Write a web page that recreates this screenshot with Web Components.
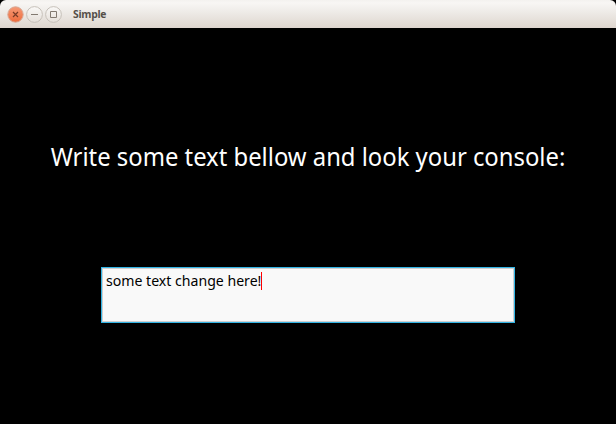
<!DOCTYPE html>
<html lang="en"><head><meta charset="utf-8"><title>Simple</title>
<style>html,body{margin:0;height:100%;background:#000;overflow:hidden}</style></head>
<body>
<app-window>
  <title-bar slot="bar">Simple</title-bar>
  <prompt-label>Write some text bellow and look your console:</prompt-label>
  <text-entry>some text change here!</text-entry>
</app-window>
<script>
const define = (name, html) => customElements.define(name, class extends HTMLElement {
  constructor() {
    super();
    this.attachShadow({mode: 'open'}).innerHTML = html;
  }
});
define('window-button', `<style>
  :host{display:block;width:17px;height:17px;flex:none}
</style><slot></slot>`);
define('title-bar', `<style>
  :host{display:flex;align-items:center;height:28px;box-sizing:border-box;padding:1px 0 0 7px;gap:2px;
    border-radius:6px 6px 0 0;background:linear-gradient(#f4f2ef 0,#f8f6f4 3px,#eeebe7 12px,#dfd7d0 27px,#ddd4cd 28px);
    font:bold 11px/16px "Open Sans","Noto Sans",sans-serif;color:#554f49}
  .t{display:block;margin:0 0 2px 9px;letter-spacing:-.3px;white-space:nowrap;transform:scaleX(.94);transform-origin:0 0}
  svg{display:block}
</style>
<window-button><svg width="17" height="17"><defs><linearGradient id="o" x2="0" y2="1"><stop stop-color="#f69a76"/><stop offset="1" stop-color="#ed6b3c"/></linearGradient></defs>
<circle cx="8.5" cy="8.5" r="7.7" fill="url(#o)" stroke="#d8a692"/><path d="M6 6l5 5M11 6l-5 5" stroke="#783b26" stroke-width="1.2"/></svg></window-button>
<window-button><svg width="17" height="17"><defs><linearGradient id="g" x2="0" y2="1"><stop stop-color="#faf9f7"/><stop offset="1" stop-color="#e5dfd9"/></linearGradient></defs>
<circle cx="8.5" cy="8.5" r="7.9" fill="url(#g)" stroke="#c6c0b9"/><path d="M5 8.5h7" stroke="#827a71"/></svg></window-button>
<window-button><svg width="17" height="17"><defs><linearGradient id="g" x2="0" y2="1"><stop stop-color="#faf9f7"/><stop offset="1" stop-color="#e5dfd9"/></linearGradient></defs>
<circle cx="8.5" cy="8.5" r="7.9" fill="url(#g)" stroke="#c6c0b9"/><path d="M5.5 5.5h6v6h-6z" fill="none" stroke="#827a71"/></svg></window-button>
<span class="t"><slot></slot></span>`);
define('prompt-label', `<style>
  :host{display:block;margin-top:110px;text-align:center;white-space:nowrap;
    font:25px/36px "Noto Sans",sans-serif;color:#fff}
  span{display:inline-block;transform:scaleX(.953)}
</style><span><slot></slot></span>`);
define('text-entry', `<style>
  :host{display:flex;align-items:flex-start;box-sizing:border-box;width:414px;height:56px;margin:93px 0 0 101px;
    border:1px solid #33b5e5;background:#f9f9f9;box-shadow:inset 0 0 0 1px #cfcfcf;padding:4px 0 0 4px;
    font:15px/18px "Noto Sans",sans-serif;color:#000}
  span{white-space:nowrap;display:block;width:155px;margin-top:-1px}
  b{font-weight:400;display:inline-block;transform:scaleX(.94);transform-origin:0 0}
  i{width:1px;height:18px;background:#f00}
</style><span><b><slot></slot></b></span><i></i>`);
define('app-window', `<style>
  :host{display:flex;flex-direction:column;width:616px;height:424px;background:#000}
</style><slot name="bar"></slot><slot></slot>`);
</script></body></html>
